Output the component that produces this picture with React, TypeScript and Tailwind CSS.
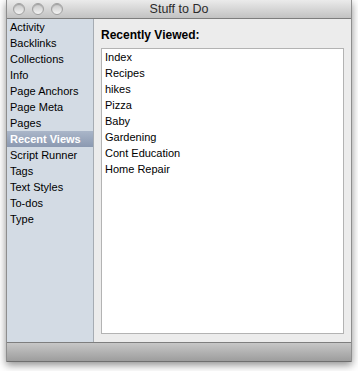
export default function App() {
  const tools = [
    "Activity",
    "Backlinks",
    "Collections",
    "Info",
    "Page Anchors",
    "Page Meta",
    "Pages",
    "Recent Views",
    "Script Runner",
    "Tags",
    "Text Styles",
    "To-dos",
    "Type",
  ]
  const recent = ["Index", "Recipes", "hikes", "Pizza", "Baby", "Gardening", "Cont Education", "Home Repair"]

  return (
    <div className="w-[358px] h-[371px] bg-white overflow-hidden font-['Liberation_Sans',Arial,sans-serif]">
      <div className="ml-[6px] w-[346px] h-[362px] flex flex-col border-x border-[#8e8e8e] shadow-[0_3px_8px_rgba(0,0,0,0.45)]">
        {/* title bar */}
        <div className="h-[19px] relative flex items-center justify-center border-b border-[#7d7d7d] bg-gradient-to-b from-[#ebebeb] to-[#c2c2c2]">
          <div className="absolute left-[6px] top-[3px] flex gap-[7px]">
            {[0, 1, 2].map((i) => (
              <div
                key={i}
                className="w-[12px] h-[12px] rounded-full border border-[#a0a0a0] bg-gradient-to-b from-[#c6c6c6] to-[#f4f4f4] shadow-[inset_0_1px_1px_rgba(0,0,0,0.2)]"
              />
            ))}
          </div>
          <span className="text-[12.5px] leading-none text-[#2b2b2b] pt-[1px]">Stuff to Do</span>
        </div>

        {/* body */}
        <div className="flex h-[323px]">
          <div className="w-[87px] shrink-0 bg-[#d3dbe4] border-r border-[#a6acb3]">
            {tools.map((t) =>
              t === "Recent Views" ? (
                <div
                  key={t}
                  className="h-[16px] px-[3px] flex items-center text-[11px] font-bold text-white bg-gradient-to-b from-[#aab6c9] to-[#8b99b1]"
                >
                  {t}
                </div>
              ) : (
                <div key={t} className="h-[16px] px-[3px] flex items-center text-[11px] text-black">
                  {t}
                </div>
              )
            )}
          </div>
          <div className="flex-1 bg-[#ececec] flex flex-col pl-[7px] pr-[7px] pb-[8px]">
            <div className="h-[29px] pt-[9px] text-[12px] font-bold leading-[14px] text-black">Recently Viewed:</div>
            <div className="flex-1 bg-white border border-[#b3b3b3] px-[3px]">
              {recent.map((r) => (
                <div key={r} className="h-[16px] flex items-center text-[11px] text-black">
                  {r}
                </div>
              ))}
            </div>
          </div>
        </div>

        {/* bottom bar */}
        <div className="h-[20px] border-t border-[#7e7e7e] border-b border-b-[#6f6f6f] bg-gradient-to-b from-[#c7c7c7] to-[#9d9d9d]" />
      </div>
    </div>
  )
}
